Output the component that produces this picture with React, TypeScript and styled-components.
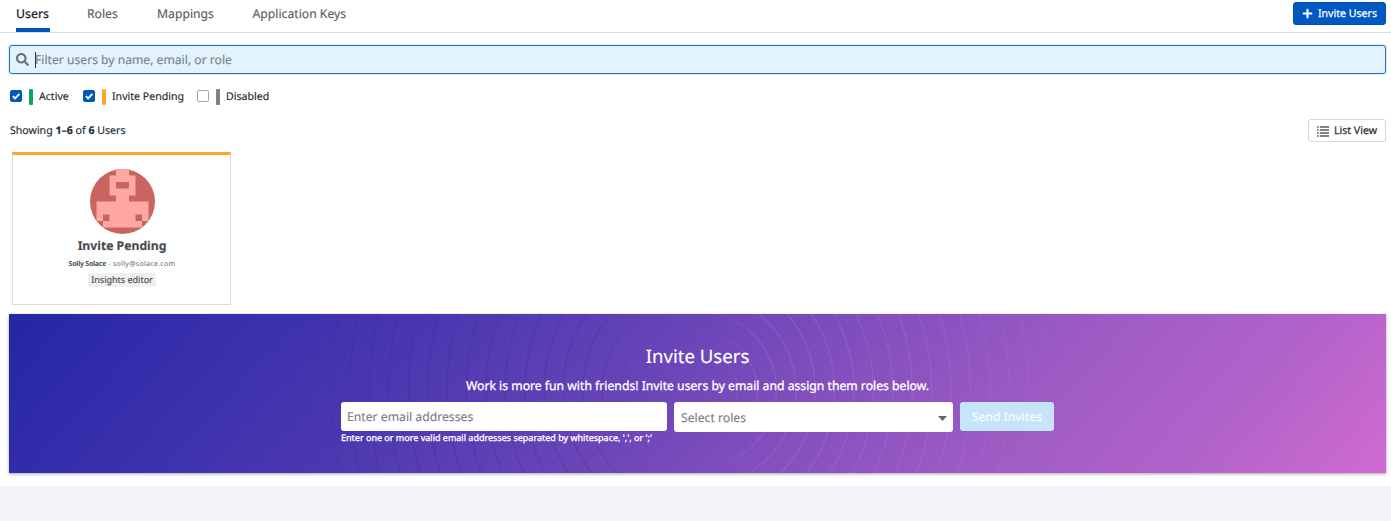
import React from "react";
import styled, { createGlobalStyle } from "styled-components";
import { FaSearch, FaPlus } from "react-icons/fa";

const Global = createGlobalStyle`
  * { box-sizing: border-box; }
  body { margin: 0; background: #f5f3f7; font-family: "Noto Sans", sans-serif; color: #1c2b34; font-size: 10.6px; text-rendering: geometricPrecision; -webkit-text-stroke: 0.15px; }
  button { text-rendering: geometricPrecision; }
`;

const Page = styled.main`
  height: 486px;
  background: #fff;
`;

const TabBar = styled.nav`
  height: 33px;
  padding: 0 5px 0 16px;
  display: flex;
  align-items: flex-start;
  border-bottom: 1px solid #dcdcdf;
`;

const Tab = styled.a<{ $active?: boolean; $width: number }>`
  height: 32px;
  width: ${(p) => p.$width}px;
  margin-right: 37px;
  padding-top: 5px;
  font-size: 12.2px;
  line-height: 18px;
  white-space: nowrap;
  color: ${(p) => (p.$active ? "#1c2b34" : "#585f65")};
  font-weight: ${(p) => (p.$active ? 500 : 400)};
  border-bottom: 4px solid ${(p) => (p.$active ? "#0055bd" : "transparent")};
`;

const InviteButton = styled.button`
  margin: 2px 0 0 auto;
  width: 93px;
  height: 23px;
  padding: 0;
  display: flex;
  align-items: center;
  justify-content: center;
  gap: 5px;
  border: 1px solid #004fb3;
  border-radius: 3px;
  background: #0059c1;
  color: #fff;
  font: 400 10.6px "Noto Sans", sans-serif;
  -webkit-text-stroke: 0.25px;
  white-space: nowrap;
`;

const Content = styled.div`
  padding: 12px 5px 0 9px;
`;

const FilterField = styled.div`
  height: 29px;
  padding: 0 0 0 6px;
  display: flex;
  align-items: center;
  border: 1px solid #2c72b5;
  border-radius: 3px;
  background: #e2f3fc;
  box-shadow: 0 0 1px 1px #d0ecfb;
  color: #7a858c;
  font-size: 12.15px;
`;

const Caret = styled.span`
  width: 1px;
  height: 16px;
  margin: 0 -1px 0 6px;
  background: #2b3238;
`;

const StatusFilters = styled.div`
  height: 17px;
  margin-top: 14px;
  display: flex;
  align-items: center;
`;

const StatusFilter = styled.label<{ $width: number }>`
  width: ${(p) => p.$width}px;
  height: 17px;
  display: flex;
  align-items: center;
  line-height: 19px;
  white-space: nowrap;
`;

const StatusName = styled.span`
  height: 17px;
`;

const Box = styled.span<{ $checked: boolean }>`
  width: 12px;
  height: 12px;
  margin: 0 6.5px 1px 1px;
  display: flex;
  border-radius: 2px;
  border: 1px solid ${(p) => (p.$checked ? "#0059b8" : "#a3a6a8")};
  background: ${(p) => (p.$checked ? "#0059b8" : "#fff")};
`;

const Stripe = styled.span<{ $color: string }>`
  width: 4px;
  height: 16px;
  margin-right: 6.5px;
  border-radius: 1px;
  background: ${(p) => p.$color};
`;

const Summary = styled.div`
  height: 23px;
  margin-top: 14px;
  padding-left: 1px;
  display: flex;
  align-items: flex-start;
  justify-content: space-between;
`;

const Count = styled.span`
  line-height: 24px;
`;

const ListButton = styled.button`
  width: 78px;
  height: 23px;
  padding: 1px 0 0;
  display: flex;
  align-items: center;
  justify-content: center;
  gap: 5px;
  border: 1px solid #d7d8dc;
  border-radius: 3px;
  background: #fff;
  color: #2b3238;
  font: 400 10.6px "Noto Sans", sans-serif;
  -webkit-text-stroke: 0.25px;
`;

const Card = styled.article`
  width: 219px;
  height: 153px;
  margin: 10px 0 0 3px;
  padding: 14px 0 0 1px;
  display: flex;
  flex-direction: column;
  align-items: center;
  border: 1px solid #dbdbdd;
  border-top: 3px solid #fca62e;
`;

const Avatar = styled.svg`
  width: 65px;
  height: 65px;
  flex: none;
  border-radius: 50%;
`;

const CardTitle = styled.h3`
  margin: 3px 0 0;
  font-size: 12.2px;
  line-height: 18px;
  color: #474c51;
`;

const Contact = styled.p`
  margin: 5px 0 0;
  font-size: 7px;
  line-height: 10px;
  color: #5c6468;
  white-space: nowrap;
  -webkit-text-stroke: 0;
`;

const ContactName = styled.b`
  letter-spacing: -0.25px;
  color: #45565a;
`;

const ContactMail = styled.span`
  letter-spacing: 0.3px;
`;

const RoleTag = styled.span`
  height: 14px;
  margin-top: 3px;
  padding: 0 3px;
  font-size: 9px;
  line-height: 14px;
  background: #f0f0f1;
  color: #474c51;
`;

const Banner = styled.section`
  height: 159px;
  margin-top: 9px;
  display: grid;
  background: linear-gradient(132deg, #2426a4 0%, #2c2aa8 6%, #3b30ad 17%, #4b38b0 29%, #6041b6 41%, #7449ba 51%, #8852be 61%, #a05cc5 74%, #b263ca 87%, #d06bd0 100%);
  box-shadow: 0 1px 3px rgba(0, 0, 0, 0.35);
  color: #fff;
`;

const Rings = styled.svg`
  grid-area: 1 / 1;
  width: 1377px;
  height: 159px;
`;

const BannerBody = styled.div`
  grid-area: 1 / 1;
  z-index: 1;
  padding: 29px 0 0;
  display: flex;
  flex-direction: column;
  align-items: center;
`;

const BannerTitle = styled.h2`
  margin: 0;
  font-size: 18.6px;
  font-weight: 400;
  line-height: 28px;
`;

const BannerText = styled.p`
  margin: 6px 0 0;
  font-size: 12.2px;
  font-weight: 400;
  -webkit-text-stroke: 0.3px;
  line-height: 18px;
`;

const Form = styled.form`
  margin-top: 7px;
  display: flex;
  align-items: flex-start;
`;

const EmailGroup = styled.div`
  width: 326px;
  margin-right: 7px;
`;

const Field = styled.div<{ $width: number; $height: number }>`
  width: ${(p) => p.$width}px;
  height: ${(p) => p.$height}px;
  padding: 0 6px 0 ${(p) => (p.$height > 29 ? 7 : 6)}px;
  display: flex;
  align-items: center;
  justify-content: space-between;
  border-radius: 3px;
  background: #fff;
  color: #7a8084;
  font-size: 12.2px;
`;

const Hint = styled.div`
  margin-top: 1px;
  font-size: 9px;
  -webkit-text-stroke: 0.3px;
  line-height: 12px;
  white-space: nowrap;
`;

const SendButton = styled.button`
  width: 94px;
  height: 29px;
  margin-left: 7px;
  padding: 0;
  border: 0;
  border-radius: 3px;
  background: #c6e4fa;
  color: #f5fbff;
  font: 500 12px "Noto Sans", sans-serif;
`;

const filters = [
  { label: "Active", color: "#12a45c", checked: true, width: 73 },
  { label: "Invite Pending", color: "#fca62e", checked: true, width: 114 },
  { label: "Disabled", color: "#808083", checked: false, width: 90 },
];

const ringRadii = Array.from({ length: 23 }, (_, i) => 19.3 + i * 19.4);

export default function App() {
  return (
    <>
      <Global />
      <Page>
        <TabBar>
          <Tab $active $width={34}>Users</Tab>
          <Tab $width={33}>Roles</Tab>
          <Tab $width={58.5}>Mappings</Tab>
          <Tab $width={96}>Application Keys</Tab>
          <InviteButton><FaPlus size={11} />Invite Users</InviteButton>
        </TabBar>
        <Content>
          <FilterField>
            <FaSearch size={13} color="#697177" />
            <Caret />
            Filter users by name, email, or role
          </FilterField>
          <StatusFilters>
            {filters.map((f) => (
              <StatusFilter key={f.label} $width={f.width}>
                <Box $checked={f.checked}>
                  {f.checked && (
                    <svg width="10" height="10" viewBox="0 0 10 10">
                      <path d="M1.8 5.1 4.1 7.3 8.4 2.8" fill="none" stroke="#fff" strokeWidth="1.9" />
                    </svg>
                  )}
                </Box>
                <Stripe $color={f.color} />
                <StatusName>{f.label}</StatusName>
              </StatusFilter>
            ))}
          </StatusFilters>
          <Summary>
            <Count>Showing <b>1–6</b> of <b>6</b> Users</Count>
            <ListButton>
              <svg width="12" height="11" viewBox="0 0 12 11">
                <path d="M0 1H1.600M0 4H1.600M0 7H1.600M0 10H1.600M2.800 1H12M2.800 4H12M2.800 7H12M2.800 10H12" stroke="#555c63" strokeWidth="1.400" />
              </svg>
              List View
            </ListButton>
          </Summary>
          <Card>
            <Avatar viewBox="0 0 65 65">
              <rect width="65" height="65" fill="#c9645f" />
              <path
                fill="#ffa7a3"
                d="M26 0H39V6.5H45.5V26.5H39V32.5H58.5V52H52V58.5H13V52H6.500V32.500H26V26.500H19.500V6.500H26ZM26 13V19.500H39V13ZM13 45.500V52H19.500V45.500ZM45.500 45.500V52H52V45.500Z"
                fillRule="evenodd"
              />
            </Avatar>
            <CardTitle>Invite Pending</CardTitle>
            <Contact><ContactName>Solly Solace</ContactName><ContactMail> - solly@solace.com</ContactMail></Contact>
            <RoleTag>Insights editor</RoleTag>
          </Card>
          <Banner>
            <Rings viewBox="0 0 1377 159">
              <defs>
                <linearGradient id="ring" gradientUnits="userSpaceOnUse" x1="220" y1="0" x2="1100" y2="0">
                  <stop offset="0" stopColor="#2d2787" stopOpacity="0" />
                  <stop offset=".15" stopColor="#2d2787" stopOpacity=".24" />
                  <stop offset=".42" stopColor="#35298d" stopOpacity=".28" />
                  <stop offset=".53" stopColor="#8050bd" stopOpacity=".05" />
                  <stop offset=".6" stopColor="#c26edb" stopOpacity=".28" />
                  <stop offset=".8" stopColor="#c26edb" stopOpacity=".28" />
                  <stop offset="1" stopColor="#c26edb" stopOpacity="0" />
                </linearGradient>
              </defs>
              {ringRadii.map((r) => (
                <circle key={r} cx="690" cy="76" r={r} fill="none" stroke="url(#ring)" strokeWidth="1.3" />
              ))}
            </Rings>
            <BannerBody>
              <BannerTitle>Invite Users</BannerTitle>
              <BannerText>Work is more fun with friends! Invite users by email and assign them roles below.</BannerText>
              <Form>
                <EmailGroup>
                  <Field $width={326} $height={29}>Enter email addresses</Field>
                  <Hint>Enter one or more valid email addresses separated by whitespace, ',', or ';'</Hint>
                </EmailGroup>
                <Field $width={279} $height={30}>
                  Select roles
                  <svg width="9" height="7" viewBox="0 0 9 7"><path d="M0 2H9L4.500 7Z" fill="#646667" /></svg>
                </Field>
                <SendButton type="button">Send Invites</SendButton>
              </Form>
            </BannerBody>
          </Banner>
        </Content>
      </Page>
    </>
  );
}
